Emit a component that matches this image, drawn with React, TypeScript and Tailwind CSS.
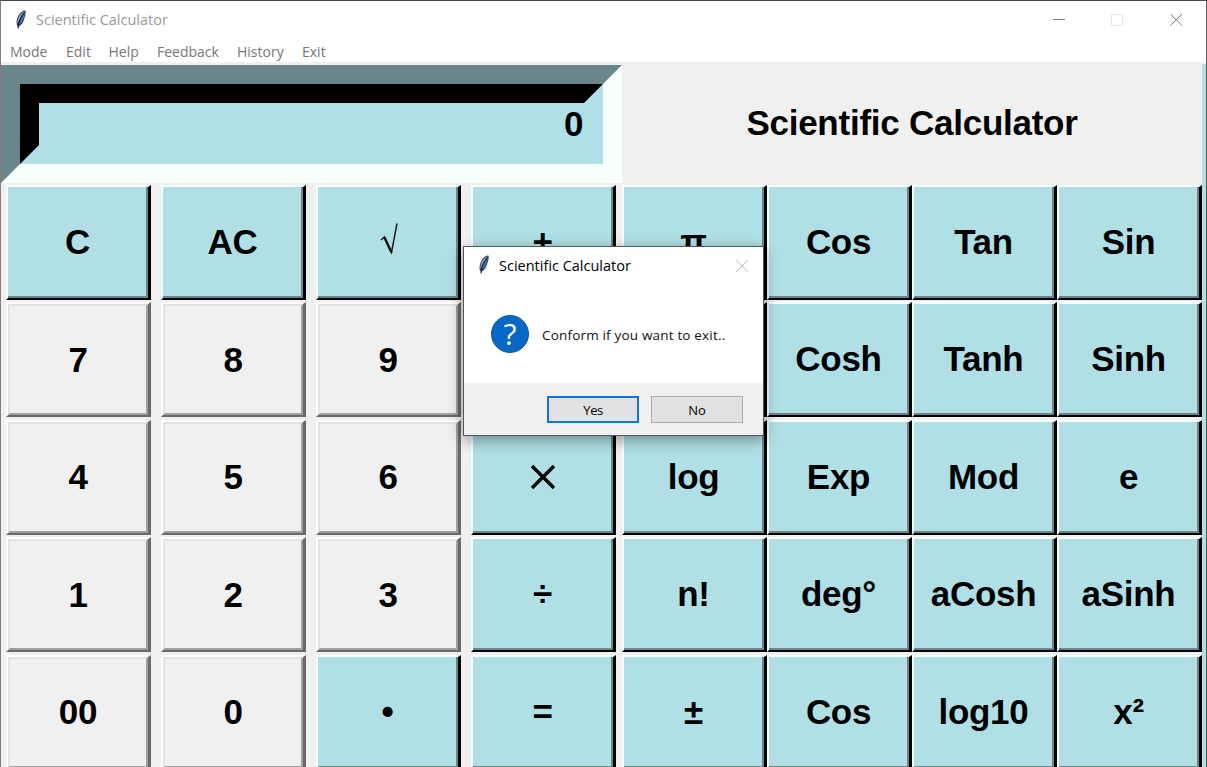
import React from "react";

type Key = { label: string; tone: "blue" | "gray" };

const blue = (label: string): Key => ({ label, tone: "blue" });
const gray = (label: string): Key => ({ label, tone: "gray" });

const basicKeys: Key[] = [
  blue("C"), blue("AC"), blue("√"), blue("+"),
  gray("7"), gray("8"), gray("9"), blue(""),
  gray("4"), gray("5"), gray("6"), blue("×"),
  gray("1"), gray("2"), gray("3"), blue("÷"),
  gray("00"), gray("0"), blue("•"), blue("="),
];

const scienceKeys: Key[] = [
  blue("π"), blue("Cos"), blue("Tan"), blue("Sin"),
  blue(""), blue("Cosh"), blue("Tanh"), blue("Sinh"),
  blue("log"), blue("Exp"), blue("Mod"), blue("e"),
  blue("n!"), blue("deg°"), blue("aCosh"), blue("aSinh"),
  blue("±"), blue("Cos"), blue("log10"), blue("x²"),
];

const menus = [
  { label: "Mode", width: "w-[56px]" },
  { label: "Edit", width: "w-[42.5px]" },
  { label: "Help", width: "w-[48.5px]" },
  { label: "Feedback", width: "w-[80px]" },
  { label: "History", width: "w-[65px]" },
  { label: "Exit", width: "w-[40px]" },
];

function Feather({ className }: { className: string }) {
  return (
    <svg viewBox="0 0 12 20" className={className}>
      <path d="M10.4 0.6C8.4 0.4 5.4 2.4 3.6 5.4C1.8 8.6 1.2 12 1.8 14.8L2.7 16.4L3 19.4L4 16.2C6.4 15.2 8.2 12.4 9.2 9C10.2 5.8 11.2 2.4 10.4 0.6Z" fill="#2a3a55" />
      <path d="M9.6 1.3C7.2 2.2 4.8 4.8 3.4 8.2C2.4 10.6 2.3 12.5 2.7 14C3.9 9.4 6.2 5 9.6 1.3Z" fill="#9db1cc" />
      <path d="M9.9 2.4C7.4 6.1 5 10.4 4 14.8C6.2 13.6 7.8 10.6 8.8 7.5Z" fill="#4a74b0" />
      <path d="M9.2 2.6C6 6.4 4 11 2.9 18" stroke="#16213a" strokeWidth="0.8" fill="none" />
    </svg>
  );
}

function Glyph({ label }: { label: string }) {
  if (label === "√") {
    return (
      <svg viewBox="0 0 20 34" className="mb-2 ml-1 h-[35px] w-5" role="img" aria-label="square root">
        <path d="M1 18.5L4.5 15.5L11.5 31L17 2" fill="none" stroke="#111" strokeWidth="1.4" />
        <path d="M4.5 16L11.5 31" stroke="#111" strokeWidth="2.4" />
      </svg>
    );
  }
  if (label === "×") {
    return (
      <svg viewBox="0 0 26 26" className="h-[26px] w-[26px]" role="img" aria-label="multiply">
        <path d="M2 2L24 24M24 2L2 24" stroke="#000" strokeWidth="3.4" />
      </svg>
    );
  }
  return <span className="pb-px">{label}</span>;
}

function CalcKey({ item }: { item: Key }) {
  const isBlue = item.tone === "blue";
  return (
    <button
      className={
        isBlue
          ? "flex border-t-2 border-r-[3px] border-b-2 border-l-2 border-t-[#f7ffff] border-r-black border-b-black border-l-[#f7ffff]"
          : "flex border-t-2 border-r-[3px] border-b-2 border-l-2 border-t-white border-r-[#696969] border-b-[#696969] border-l-white"
      }
    >
      <span
        className={
          isBlue
            ? "flex h-full w-full items-center justify-center border-r-2 border-b-2 border-r-[#6b868a] border-b-[#6b868a] bg-[#b0e0e6] pt-px pl-px"
            : "flex h-full w-full items-center justify-center border-2 border-t-[#e3e3e3] border-r-[#a0a0a0] border-b-[#a0a0a0] border-l-[#e3e3e3] bg-[#f0f0f0]"
        }
      >
        {item.label && <Glyph label={item.label} />}
      </span>
    </button>
  );
}

export default function App() {
  return (
    <div className="relative flex h-[767px] w-[1207px] flex-col overflow-hidden border-t border-r border-l border-t-[#494647] border-r-[#55555a] border-l-[#8b7b78] bg-[#f0f0f0] font-['Liberation_Sans',sans-serif]">
      <header className="flex h-[38px] shrink-0 items-center bg-white">
        <Feather className="mb-px ml-[14px] h-5 w-3" />
        <span className="ml-[9px] flex-1 font-['Open_Sans',sans-serif] text-[14.5px] whitespace-nowrap text-[#999]">Scientific Calculator</span>
        <svg viewBox="0 0 130 14" className="mr-[23px] h-[14px] w-[130px]" fill="none">
          <path d="M0 6.5H12" stroke="#777" />
          <rect x="58.5" y="1.5" width="11" height="11" stroke="#e6e6e6" />
          <path d="M117.5 1L129 12.5M129 1L117.5 12.5" stroke="#777" />
        </svg>
      </header>
      <nav className="flex h-[23px] shrink-0 items-center bg-white pt-px pl-[9px] font-['Open_Sans',sans-serif] text-[14px] text-[#777]">
        {menus.map((m) => (
          <span key={m.label} className={`${m.width} whitespace-nowrap`}>{m.label}</span>
        ))}
      </nav>

      <div className="flex h-[122px] shrink-0">
        <div className="mt-[3px] h-[118px] w-[621px] border-[19px] border-t-[#6b868a] border-r-[#f7ffff] border-b-[#f7ffff] border-l-[#6b868a]">
          <div className="flex h-full w-full items-start justify-end border-[19px] border-t-black border-r-[#b0e0e6] border-b-[#b0e0e6] border-l-black bg-[#b0e0e6]">
            <span className="pr-px text-[35px] leading-[41px] font-bold tracking-[-0.5px]">0</span>
          </div>
        </div>
        <div className="flex flex-1 items-center justify-center pt-px text-[35px] font-bold tracking-[-0.25px]">Scientific Calculator</div>
        <div className="mt-[2px] w-1 bg-[#b0e0e6]" />
      </div>

      <main className="flex flex-1 pl-[5px] text-[35px] leading-none font-bold tracking-[-0.3px]">
        <div className="mt-px grid grid-cols-[repeat(4,145px)] grid-rows-[repeat(5,115px)] gap-x-[10px] gap-y-[2.4px]">
          {basicKeys.map((item, i) => <CalcKey key={i} item={item} />)}
        </div>
        <div className="mt-px ml-[6px] grid grid-cols-[repeat(4,145px)] grid-rows-[repeat(5,115px)] gap-y-[2.4px]">
          {scienceKeys.map((item, i) => <CalcKey key={i} item={item} />)}
        </div>
        <div className="flex-1 bg-[#b0e0e6]" />
      </main>

      <div role="dialog" className="absolute top-[245px] left-[462px] flex h-[190px] w-[301px] flex-col border border-[#555] bg-white font-['Open_Sans',sans-serif] shadow-[0_4px_14px_rgba(0,0,0,0.4)]">
        <div className="flex h-[38px] shrink-0 items-center">
          <Feather className="mb-[2px] ml-[14px] h-5 w-3" />
          <span className="ml-[9px] flex-1 text-[14.5px] whitespace-nowrap">Scientific Calculator</span>
          <svg viewBox="0 0 14 14" className="mr-[14px] h-[14px] w-[14px]" stroke="#bbb">
            <path d="M1 1L13 13M13 1L1 13" />
          </svg>
        </div>
        <div className="flex flex-1 items-center pb-[1px] pl-[27px]">
          <span className="flex h-[38px] w-[38px] items-center justify-center rounded-full border border-[#08559f] bg-[#0568c6] text-[30px] leading-none text-white">?</span>
          <span className="ml-[13px] pt-[4px] text-[13.5px] tracking-[0.18px] whitespace-nowrap text-[#111]">Conform if you want to exit..</span>
        </div>
        <div className="flex h-[52px] shrink-0 items-center justify-end gap-3 bg-[#f0f0f0] pr-5 text-[13px]">
          <button className="h-[27px] w-[92px] border-2 border-[#0f76d1] bg-[#e1e1e1] pt-[3px] tracking-[-0.5px]">Yes</button>
          <button className="h-[27px] w-[92px] border border-[#adadad] bg-[#e1e1e1] pt-[3px]">No</button>
        </div>
      </div>
    </div>
  );
}
